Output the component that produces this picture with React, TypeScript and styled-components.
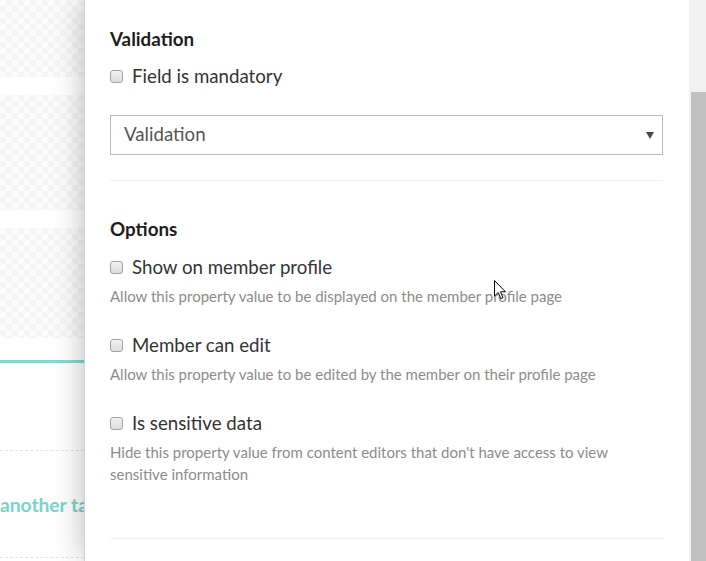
import React from "react";
import styled, { createGlobalStyle } from "styled-components";

const Global = createGlobalStyle`
  html, body { margin: 0; padding: 0; background: #fff; }
  body { font-family: Lato, "Open Sans", sans-serif; }
`;

const Page = styled.div`
  position: relative;
  display: flex;
  width: 706px;
  height: 561px;
  overflow: hidden;
  background: #fff;
`;

const Backdrop = styled.div`
  flex: none;
  width: 84px;
  display: flex;
  flex-direction: column;
`;

const PatternCard = styled.div<{ $h: number; $mt: number }>`
  flex: none;
  height: ${(p) => p.$h}px;
  margin-top: ${(p) => p.$mt}px;
  background-color: #fcfcfc;
  background-image: conic-gradient(#f5f5f5 25%, transparent 0 50%, #f5f5f5 0 75%, transparent 0);
  background-size: 12px 12px;
`;

const TealLine = styled.div`
  flex: none;
  height: 3px;
  margin-top: 22px;
  background: #7fdad1;
`;

const DashedRow = styled.div`
  flex: none;
  margin-top: 87px;
  height: 106px;
  border-top: 1px dashed #e3e3e3;
  border-bottom: 1px dashed #e3e3e3;
  display: flex;
  align-items: center;
`;

const TabLink = styled.span`
  font-family: Lato, sans-serif;
  font-weight: 700;
  font-size: 19.2px;
  line-height: 24px;
  color: #74d6cb;
  white-space: nowrap;
  margin-top: 1px;
`;

const Panel = styled.div`
  position: relative;
  z-index: 1;
  flex: 1;
  display: flex;
  background: #fff;
  box-shadow: 0 0 28px rgba(0, 0, 0, 0.28);
  border-left: 1px solid #d2d2d2;
`;

const Content = styled.div`
  flex: 1;
  padding: 29px 26px 0 25px;
  display: flex;
  flex-direction: column;
`;

const Heading = styled.div<{ $mt?: number }>`
  font-weight: 700;
  font-size: 18.8px;
  line-height: 20px;
  color: #1d1d1d;
  margin-top: ${(p) => p.$mt ?? 0}px;
`;

const CheckRow = styled.label<{ $mt: number }>`
  display: flex;
  align-items: center;
  gap: 9px;
  height: 24px;
  margin-top: ${(p) => p.$mt}px;
  font-size: 18.7px;
  color: #333;
`;

const Box = styled.span`
  flex: none;
  width: 11px;
  height: 11px;
  border: 1px solid #a3a3a3;
  border-radius: 3px;
  background: linear-gradient(#f2f2f2, #dcdcdc);
`;

const Select = styled.div`
  margin-top: 27px;
  height: 40px;
  box-sizing: border-box;
  border: 1px solid #bbbbbb;
  display: flex;
  align-items: center;
  justify-content: space-between;
  padding: 0 8px 3px 13px;
  font-size: 18.7px;
  color: #555;
`;

const Caret = styled.span`
  width: 0;
  height: 0;
  border-left: 4px solid transparent;
  border-right: 4px solid transparent;
  border-top: 7px solid #4a4a4a;
  margin-top: 4px;
`;

const Divider = styled.div<{ $mt: number }>`
  margin-top: ${(p) => p.$mt}px;
  height: 1px;
  background: #f0f0f0;
`;

const Option = styled.div<{ $mt: number }>`
  display: flex;
  flex-direction: column;
  margin-top: ${(p) => p.$mt}px;
`;

const Desc = styled.div`
  margin-top: 6px;
  font-size: 15px;
  line-height: 22px;
  color: #8c8c8c;
  max-width: 520px;
`;

const Scrollbar = styled.div`
  flex: none;
  width: 17px;
  background: #f1f1f1;
  display: flex;
  flex-direction: column;
`;

const Thumb = styled.div`
  margin: 92px 0 0 2px;
  flex: 1;
  background: #c1c1c1;
`;

const Cursor = styled.svg`
  position: absolute;
  left: 494px;
  top: 280px;
  z-index: 5;
`;

const options = [
  {
    label: "Show on member profile",
    desc: "Allow this property value to be displayed on the member profile page",
  },
  {
    label: "Member can edit",
    desc: "Allow this property value to be edited by the member on their profile page",
  },
  {
    label: "Is sensitive data",
    desc: "Hide this property value from content editors that don't have access to view sensitive information",
  },
];

export default function App() {
  return (
    <>
      <Global />
      <Page>
        <Backdrop>
          <PatternCard $h={77} $mt={0} />
          <PatternCard $h={115} $mt={18} />
          <PatternCard $h={110} $mt={18} />
          <TealLine />
          <DashedRow>
            <TabLink>another tab</TabLink>
          </DashedRow>
        </Backdrop>
        <Panel>
          <Content>
            <Heading>Validation</Heading>
            <CheckRow $mt={15}>
              <Box />
              Field is mandatory
            </CheckRow>
            <Select>
              <span>Validation</span>
              <Caret />
            </Select>
            <Divider $mt={25} />
            <Heading $mt={38}>Options</Heading>
            {options.map((o, i) => (
              <Option key={o.label} $mt={i === 0 ? 16 : 26}>
                <CheckRow $mt={0}>
                  <Box />
                  {o.label}
                </CheckRow>
                <Desc>{o.desc}</Desc>
              </Option>
            ))}
            <Divider $mt={53} />
          </Content>
          <Scrollbar>
            <Thumb />
          </Scrollbar>
        </Panel>
        <Cursor width="13" height="20" viewBox="0 0 13 20">
          <path
            d="M0.5 0.5 L0.5 16 L4.2 12.5 L6.8 18.6 L9 17.6 L6.5 11.8 L11.5 11.8 Z"
            fill="#fff"
            stroke="#000"
            strokeWidth="1"
            strokeLinejoin="miter"
          />
        </Cursor>
      </Page>
    </>
  );
}
